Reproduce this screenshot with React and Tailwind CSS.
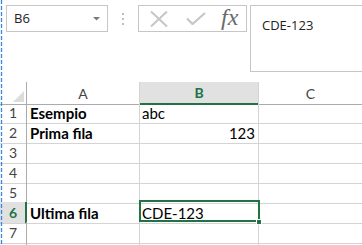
import { useState } from "react";

const ROWS = [
  { n: 1, a: "Esempio", b: "abc" },
  { n: 2, a: "Prima fila", b: "123", right: true },
  { n: 3 },
  { n: 4 },
  { n: 5 },
  { n: 6, a: "Ultima fila", b: "CDE-123", active: true },
  { n: 7 },
  { n: "" },
];

const cellFont = { fontFamily: "Lato, 'Open Sans', sans-serif" };

function FormulaBar() {
  return (
    <div className="flex items-start pl-[6px] pt-[5px] h-[82px]" style={{ fontFamily: "'Open Sans', 'Noto Sans', sans-serif" }}>
      <div className="w-[102px] h-[27px] border border-[#c6c6c6] flex items-center justify-between pl-[7px] pr-[6px]">
        <span className="text-[13px] text-[#222] leading-none">B6</span>
        <svg width="8" height="4" viewBox="0 0 8 4">
          <path d="M0 0h7L3.5 3.5z" fill="#7a7a7a" />
        </svg>
      </div>
      <div className="w-[30px] h-[27px] flex flex-col items-center justify-center gap-[3px]">
        <span className="w-[2px] h-[2px] bg-[#bdbdbd]" />
        <span className="w-[2px] h-[2px] bg-[#bdbdbd]" />
        <span className="w-[2px] h-[2px] bg-[#bdbdbd]" />
      </div>
      <div className="w-[109px] h-[27px] border border-[#c6c6c6] flex items-center">
        <div className="w-[36px] flex justify-center pl-[4px]">
          <svg width="18" height="16" viewBox="0 0 18 16">
            <path d="M1 0.5L17 15.5M17 0.5L1 15.5" stroke="#c6c6c6" strokeWidth="2" />
          </svg>
        </div>
        <div className="w-[36px] flex justify-center pl-[6px]">
          <svg width="20" height="13" viewBox="0 0 20 13">
            <path d="M1 6.5L6.5 12L19 1" stroke="#c6c6c6" strokeWidth="2.2" fill="none" />
          </svg>
        </div>
        <div className="w-[36px] flex justify-center pl-[3px]">
          <span className="text-[#6a6a6a] italic text-[24px] leading-none -mt-[3px]" style={{ fontFamily: "'Liberation Serif', serif" }}>
            fx
          </span>
        </div>
      </div>
      <div className="ml-[3px] flex-1 h-[67px] border border-r-0 border-[#c6c6c6] pl-[11px] pt-[6px]">
        <span className="text-[13px] text-[#222] leading-none">CDE-123</span>
      </div>
    </div>
  );
}

function Grid() {
  return (
    <div className="relative text-[15px]" style={cellFont}>
      <div className="grid grid-cols-[27px_113px_119px_1fr] h-[20px]">
        <div className="border-r border-b border-[#ababab] flex items-end justify-end pr-[2px] pb-[2px]">
          <svg width="11" height="11" viewBox="0 0 11 11">
            <path d="M11 0V11H0z" fill="#dcdcdc" />
          </svg>
        </div>
        <div className="border-r border-b border-r-[#d4d4d4] border-b-[#ababab] flex items-center justify-center text-[#444] text-[14px]">A</div>
        <div className="border-r border-r-[#d4d4d4] border-b-2 border-b-[#217346] bg-[#e1e1e1] flex items-center justify-center text-[#217346] font-bold text-[14px]">B</div>
        <div className="border-b border-[#ababab] flex items-center justify-center text-[#444] text-[14px]">C</div>
      </div>
      {ROWS.map((r, i) => (
        <div key={i} className="grid grid-cols-[27px_113px_119px_1fr] h-[20px]">
          <div
            className={
              r.active
                ? "border-r-2 border-r-[#217346] border-b border-b-[#d4d4d4] bg-[#e1e1e1] flex items-center justify-center pl-[1px] text-[#217346] font-bold text-[14px]"
                : "border-r border-r-[#ababab] border-b border-b-[#d4d4d4] flex items-center justify-center text-[#444] text-[14px]"
            }
          >
            {r.n}
          </div>
          <div className="border-r border-b border-[#d4d4d4] flex items-end pl-[3px] pb-[1px] font-bold text-black leading-[18px]">
            {r.a}
          </div>
          <div
            className={`border-r border-b border-[#d4d4d4] flex items-end pb-[1px] text-black leading-[18px] ${
              r.right ? "justify-end pr-[3px]" : "pl-[2px]"
            }`}
          >
            {r.b}
          </div>
          <div className="border-b border-[#d4d4d4]" />
        </div>
      ))}
      <div className="absolute left-[139px] top-[118px] w-[121px] h-[22px] border-2 border-[#217346] pointer-events-none" />
      <div className="absolute left-[256px] top-[137px] w-[6px] h-[6px] bg-[#217346] border border-white" />
    </div>
  );
}

export default function App() {
  const [sel] = useState("B6");
  return (
    <div className="relative w-[362px] h-[245px] overflow-hidden bg-white" data-sel={sel}>
      <FormulaBar />
      <Grid />
      <svg className="absolute left-0 top-0" width="3" height="245">
        <line x1="1.5" y1="0" x2="1.5" y2="245" stroke="#3a86d9" strokeWidth="1.3" strokeDasharray="4 2" />
      </svg>
    </div>
  );
}
